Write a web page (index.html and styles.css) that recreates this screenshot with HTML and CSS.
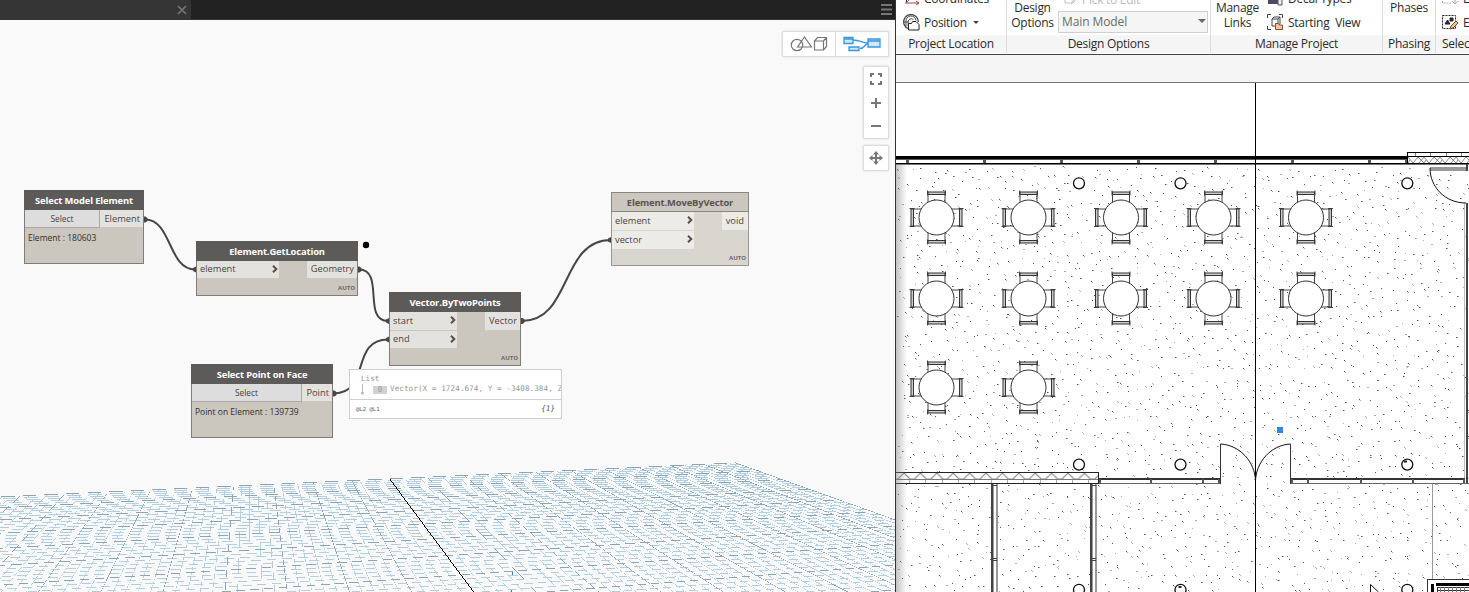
FILE: index.html
```html
<!DOCTYPE html>
<html lang="en">
<head>
<meta charset="utf-8">
<title>Workspace</title>
<link rel="stylesheet" href="styles.css">
</head>
<body>
<main class="app">
<section class="graph">
  <header class="tabs"><div class="tab"><svg width="10" height="10" viewBox="0 0 10 10"><path d="M1 1l8 8M9 1l-8 8" stroke="#777" stroke-width="1.700"/></svg></div><svg class="menu" width="11" height="11" viewBox="0 0 11 11"><path d="M0 1h11M0 5.500h11M0 10h11" stroke="#777" stroke-width="1.800"/></svg></header>
  <div class="canvas">
    <svg class="layer" width="895" height="572" viewBox="0 20 895 572" fill="none">
      <g shape-rendering="crispEdges">
        <path id="minorGray" stroke="#b7cbd7"/><path id="minorBlue" stroke="#b0d2e6"/><path id="major" stroke="#8da4b2"/><path id="axis" stroke="#000"/>
        <path d="M512.5 572v3M511.5 590v2" stroke="#2a86d8"/>
      </g>
      <g stroke="#474645" stroke-width="2">
        <path d="M145 219.500C172 219.500 168 269.500 195 269.500M359 269.500C385 269.500 362 321 388 321M522 321C572 321 560 240 611 240M334 393.500C371 393 350 339.500 388 339.500"/>
      </g>
      <g fill="#474645"><path d="M144 216.500h1.500l2 1.500v3l-2 1.500H144zM358 266.500h1.500l2 1.500v3l-2 1.500H358zM521 318h1.500l2 1.500v3l-2 1.500H521zM333 390.500h1.500l2 1.500v3l-2 1.500H333z"/><path d="M196 266.500l-3 1.500v3l3 1.500zM389 318l-3 1.500v3l3 1.500zM389 336.500l-3 1.500v3l3 1.500zM611 237l-3 1.500v3l3 1.500z"/></g>
      <circle cx="366" cy="245" r="3.200" fill="#000"/>
    </svg>

    <article class="node n-model">
      <h2>Select Model Element</h2>
      <div class="pick"><button>Select</button><span>Element</span></div>
      <p>Element : 180603</p>
    </article>
    <article class="node n-location">
      <h2>Element.GetLocation</h2>
      <div class="ports"><div class="ins"><span>element<svg class="chev" viewBox="0 0 6 8"><path d="M1 .8l3.300 3.200L1 7.200"/></svg></span></div><span class="out">Geometry</span></div>
      <small>AUTO</small>
    </article>
    <article class="node n-vector">
      <h2>Vector.ByTwoPoints</h2>
      <div class="ports"><div class="ins"><span>start<svg class="chev" viewBox="0 0 6 8"><path d="M1 .8l3.300 3.200L1 7.200"/></svg></span><span>end<svg class="chev" viewBox="0 0 6 8"><path d="M1 .8l3.300 3.200L1 7.200"/></svg></span></div><span class="out">Vector</span></div>
      <small>AUTO</small>
    </article>
    <article class="node n-point">
      <h2>Select Point on Face</h2>
      <div class="pick"><button>Select</button><span>Point</span></div>
      <p>Point on Element : 139739</p>
    </article>
    <article class="node n-move idle">
      <h2>Element.MoveByVector</h2>
      <div class="ports"><div class="ins"><span>element<svg class="chev" viewBox="0 0 6 8"><path d="M1 .8l3.300 3.200L1 7.200"/></svg></span><span>vector<svg class="chev" viewBox="0 0 6 8"><path d="M1 .8l3.300 3.200L1 7.200"/></svg></span></div><span class="out">void</span></div>
      <small>AUTO</small>
    </article>

    <div class="preview">
      <div class="tree"><div class="list">List</div><div class="item"><svg width="5" height="11" viewBox="0 0 5 11"><path d="M2.500 0v9" stroke="#bbb"/><circle cx="2.500" cy="9" r="1.500" fill="#bbb"/></svg><b>0</b><span>Vector(X = 1724.674, Y = -3408.384, Z</span></div></div>
      <div class="levels"><span>@L2 @L1</span><i>{1}</i></div>
    </div>

    <div class="modes">
      <span><svg width="38" height="16" viewBox="0 0 38 16" fill="none" stroke="#777" stroke-width="1.200"><circle cx="7" cy="9" r="5.700"/><path d="M14.500 1L7.500 11h14zM24.500 5h9v9h-9zM24.500 5l3-3.500h9v9l-3 3.500M33.500 5l3-3.500"/></svg></span>
      <span><svg width="38" height="16" viewBox="0 0 38 16" fill="#cfe9f6" stroke="#3a95dc" stroke-width="1.300"><path d="M10 4c8 0 8 3 15 3M17 12.500c5 0 4-4 8-5" fill="none"/><path d="M1 1.500h9v6H1zM25 3h12v8H25zM6 11h10v3.500H6z"/><path d="M1 3h9M25 5h12" fill="none"/></svg></span>
    </div>
    <div class="tools zoomer">
      <svg width="12" height="12" viewBox="0 0 12 12" fill="none" stroke="#777" stroke-width="2"><path d="M1 4V1h3M8 1h3v3M11 8v3H8M4 11H1V8"/></svg>
      <svg width="12" height="12" viewBox="0 0 12 12" stroke="#777" stroke-width="2"><path d="M1 6h10M6 1v10"/></svg>
      <svg width="12" height="12" viewBox="0 0 12 12" stroke="#777" stroke-width="2"><path d="M1 6h10"/></svg>
    </div>
    <div class="tools pan"><svg width="14" height="14" viewBox="0 0 14 14" fill="#777"><path d="M7 0l3 3.500H8V6h2.500V4L14 7l-3.500 3V8H8v2.500h2L7 14l-3-3.500h2V8H3.500v2L0 7l3.500-3v2H6V3.500H4z"/></svg></div>
  </div>
</section>

<section class="revit">
  <div class="ribbon">
    <div class="panel p1"><div class="body"><div class="rows">
      <div><svg width="17" height="17" viewBox="0 0 17 17" fill="none"><path d="M3.500 0v13" stroke="#234"/><path d="M3 13L13 3" stroke="#4b84c8"/><path d="M2 13h14M13 11l3 2-3 2" stroke="#a33f3a"/></svg>Coordinates</div>
      <div><svg width="17" height="17" viewBox="0 0 17 17" fill="none" stroke="#444"><path d="M5 14.500A7.300 7.300 0 1 1 15.300 8" stroke-width="1.300"/><path d="M3 12V7.500a5 5 0 0 1 10-1M5.200 12V8a3 3 0 0 1 5-2.500M1 8h4" /><path d="M5.500 9.500h3l1-2h3.500l3 3v5.500h-10.500z" fill="#fff" stroke="#222"/></svg>Position<i class="drop"></i></div></div></div><footer>Project Location</footer></div>
    <div class="panel p2"><div class="body"><div class="big">Design<br>Options</div><div class="model"><div class="edit"><svg width="15" height="12" viewBox="0 0 15 12" fill="none" stroke="#bbb"><path d="M1 2v8h5M8 9l5-6 1 1-5 6-2 1z"/></svg>Pick to Edit</div><div class="select">Main Model<i></i></div></div></div><footer>Design Options</footer></div>
    <div class="panel p3"><div class="body"><div class="big">Manage<br>Links</div><div class="rows">
      <div><svg width="17" height="17" viewBox="0 0 17 17"><path d="M1 6h11v8H1z" fill="#484b61"/><path d="M11 7h4v8h-4z" fill="#eee" stroke="#555"/></svg>Decal Types</div>
      <div><svg width="17" height="17" viewBox="0 0 17 17" fill="none" stroke="#444"><path d="M.5 4V.5H4M12 .5h3.500V4M.5 12v3.500H4M5 5l2-2h6v7l-2 2H5zM5 5h6v7M11 5l2-2"/><path d="M8.500 15.500v-6h3l1 1.500h3v4.500z" fill="#f0c49a" stroke="#8c4b32"/></svg>Starting&nbsp; View</div></div></div><footer>Manage Project</footer></div>
    <div class="panel p4"><div class="body"><div class="big">Phases</div></div><footer>Phasing</footer></div>
    <div class="panel p5"><div class="body"><div class="rows">
      <div><svg width="17" height="17" viewBox="0 0 17 17" fill="none" stroke="#aaa"><path d="M.5 2v11H9" stroke-dasharray="2 1"/><path d="M13 6v7M10 11l3 3 3-3"/></svg>Load</div>
      <div><svg width="17" height="17" viewBox="0 0 17 17" fill="none" stroke="#222"><path d="M.5 1.500h13v13H.5z" stroke-dasharray="2 1"/><path d="M3 10l2.500-4L8 10zM8 4h3v3H8z" fill="#333"/><path d="M8 15l1-3 5-5 2 2-5 5z" fill="#f0c980" stroke="#743"/></svg>Edit</div></div></div><footer>Selection</footer></div>
  </div>
  <div class="optionbar"></div>
  <div class="plan">
    <svg width="573" height="509" viewBox="896 83 573 509" fill="none" stroke="#333">
      <defs>
        <g id="chair"><path d="M-8.500-14v-12M8.500-14v-12M-9-27v5M9-27v5" stroke="#444"/><path d="M-8.500-25.500h17v2.500h-17z" fill="#ccc" stroke="#333"/></g>
        <g id="table"><use href="#chair"/><use href="#chair" transform="rotate(90)"/><use href="#chair" transform="rotate(180)"/><use href="#chair" transform="rotate(270)"/><circle r="17.500" fill="#fff"/></g>
        <linearGradient id="shade"><stop offset="0" stop-color="#888" stop-opacity=".5"/><stop offset="1" stop-color="#888" stop-opacity="0"/></linearGradient>
        <pattern id="truss" width="16.400" height="6.500" patternUnits="userSpaceOnUse" x="904" y="473"><path d="M0 0l6 6h4.500l6-6" stroke="#777"/></pattern>
        <pattern id="truss2" width="16" height="7" patternUnits="userSpaceOnUse" x="1408" y="157"><path d="M0 0l5 6 5-6M10 0l6 6M0 6l2-3M16 0l-5 6" stroke="#888"/></pattern>
      </defs>
      <g shape-rendering="crispEdges"><path id="speckDark" stroke="#555"/><path id="speckLight" stroke="#aaa"/></g>
      <g id="tables"></g>
      <g shape-rendering="crispEdges">
        <path d="M896 156h511v8h-511z" fill="#fff" stroke="none"/>
        <path d="M896 157.500h511" stroke="#000" stroke-width="3"/><path d="M896 163.500h573" stroke="#000"/><path d="M896 159.500h511" stroke="#555"/><path d="M896 164.500h573" stroke="#777"/>
        <path d="M907.500 159v4M984.500 159v4M1061.500 159v4M1138.500 159v4M1215.500 159v4M1292.500 159v4M1369.500 159v4M1406 159v4" stroke="#555" stroke-width="3"/>
        <path d="M1407 152h62v12h-62z" fill="#fff" stroke="none"/><path d="M1407.500 164v-11.500H1469M1407 156.500h62M1407 163.500h62" stroke="#000"/>
        <path d="M1415.500 153v3M1430.500 153v3M1446.500 153v3M1461.500 153v3" stroke="#888"/>
        <path d="M1430 167h36v4h-36z" fill="#999" stroke="none"/><path d="M1466.500 164v7M1466.500 203v281" stroke="#444" stroke-width="2"/><path d="M1464.500 203v275" stroke="#bbb"/>
        <path d="M894.500 472.500h204v11h-204z" fill="#fff" stroke="#222"/><path d="M896 479.500h202" stroke="#777"/><path d="M909.500 480v3M925.500 480v3M942.500 480v3M958.500 480v3M974.500 480v3M991.500 480v3M1007.500 480v3M1023.500 480v3M1040.500 480v3M1056.500 480v3M1072.500 480v3M1088.500 480v3" stroke="#aaa"/>
        <path d="M1099 478h121v6h-121zM1291 478h175v6h-175z" fill="#fff" stroke="none"/>
        <path d="M1099 479h121M1291 479h174" stroke="#333" stroke-width="2"/><path d="M1099 483.500h121M1291 483.500h178" stroke="#666"/>
        <path d="M1100 479v4M1151 479v4M1203 479v4M1219 479v4M1292 479v4M1308 479v4M1360.500 479v4M1413 479v4M1464 479v4" stroke="#555" stroke-width="2"/>
        <path d="M991 484h7v108h-7zM1090 484h7v108h-7z" fill="#fff" stroke="none"/><path d="M992 484v108M1091 484v108" stroke="#444" stroke-width="2"/><path d="M993.500 484v108M1092.500 484v108" stroke="#999"/><path d="M997.500 484v108M1096.500 484v108M996.500 484v108M1095.500 484v108" stroke="#999"/><path d="M993 485.500h4M1092 485.500h4M993 558.500h4M1092 558.500h4M993 560.500h4M1092 560.500h4" stroke="#444"/>
        <path d="M1432.500 484v95" stroke="#999"/><path d="M1220.500 444v40M1290.500 444v40" stroke="#333"/><path d="M1255.500 83v509" stroke="#000"/>
        <path d="M1427.500 592v-12.500H1469v12.500z" fill="#fff"/><path d="M1436 584h33" stroke="#000" stroke-width="3"/><path d="M1432 592v-8" stroke="#000" stroke-width="3"/><path d="M1437.500 592v-5H1469M1438 590.500h31" stroke="#333"/><path d="M1440.500 587v5M1444.500 587v5M1448.500 587v5M1452.500 587v5M1456.500 587v5M1460.500 587v5M1464.500 587v5" stroke="#777"/>
        <path d="M1277 427h6v6h-6z" fill="#2f88d8" stroke="none"/>
      </g>
      <path d="M896 473h202v6.500h-202z" fill="url(#truss)" stroke="none"/><path d="M1408 157h61v6.500h-61z" fill="url(#truss2)" stroke="none"/>
      <path d="M1220.500 444C1240 445 1255 462 1255.500 481M1290.500 444C1271 445 1256 462 1255.500 481M1430 168c0 19 15 35 36 35" stroke="#111"/>
      <g stroke="#111" stroke-width="1.300" fill="#fff"><circle cx="1079" cy="183.300" r="5.500"/><circle cx="1180.500" cy="183.300" r="5.500"/><circle cx="1407.300" cy="183.300" r="5.500"/><circle cx="1079" cy="464.600" r="5.500"/><circle cx="1180.500" cy="464.600" r="5.500"/><circle cx="1407.300" cy="464.600" r="5.500"/><circle cx="1079" cy="589.800" r="5.500"/><circle cx="1180.500" cy="589.800" r="5.500"/><circle cx="1407.300" cy="589.800" r="5.500"/></g>
      <path d="M1404 460.500h3v2h-3zM1178.500 586h3v2h-3z" fill="#222" stroke="none"/>
      <path d="M1370.500 592v-7.500l8 7.500" stroke="#111" fill="#fff"/>
      <path d="M896 165h11v427h-11z" fill="url(#shade)" stroke="none"/>
    </svg>
  </div>
</section>
</main>
<script src="scene.js"></script>
</body>
</html>
```
FILE: styles.css
```css
* { box-sizing: border-box; }
body { margin: 0; width: 1469px; height: 592px; overflow: hidden; font-family: "Open Sans", "Noto Sans", sans-serif; }
.app { display: flex; height: 592px; }
.graph { width: 896px; height: 592px; border-right: 1px solid #333; background: #f9f9f9; }
.tabs { height: 20px; background: #212121; border-bottom: 1px solid #3b3437; display: flex; justify-content: space-between; align-items: center; padding-right: 3px; }
.tab { width: 191px; height: 19px; background: #353535; display: flex; align-items: center; justify-content: flex-end; padding-right: 4px; }
.canvas { position: relative; height: 572px; overflow: hidden; }
.layer { display: block; }

.node { position: absolute; border: 1px solid #807d79; background: #cbc6be; color: #4a4541; font-size: 9.3px; display: flex; flex-direction: column; }
.node h2 { margin: -1px -1px 0; height: 20px; flex: none; background: #5d5b59; color: #fff; font-size: 9.4px; line-height: 21px; font-weight: 700; text-align: center; letter-spacing: -.13px; }
.node p { margin: 0; padding: 0 3px; line-height: 19px; font-size: 8.5px; color: #33302e; }
.pick { display: flex; height: 18px; flex: none; }
.pick button { flex: 1; border: 0; border-right: 1px solid #aaa; border-bottom: 1px solid #aaa; background: #ddd; padding: 0; font: 8.4px "Open Sans", sans-serif; color: #444; }
.pick span, .out { background: #e4e2de; line-height: 17px; padding: 0 3px 0 4px; text-align: right; height: 18px; }
.pick span { height: 17px; }
.ports { display: flex; justify-content: space-between; align-items: flex-start; }
.ins { display: flex; flex-direction: column; gap: 1px; }
.ins span { display: flex; align-items: center; justify-content: space-between; height: 18px; padding: 0 1px 2px 3px; background: #e4e2de; }
.ins span + span { height: 17px; }
.chev { width: 6px; height: 8px; fill: none; stroke: #55504c; stroke-width: 2; }
.node small { position: absolute; right: 2px; bottom: 3px; font-size: 6px; line-height: 8px; font-weight: 700; color: #6d6864; }
.n-model { left: 24px; top: 170px; width: 120px; height: 74px; }
.n-model button { flex: none; width: 75px; }
.n-model .pick span, .n-point .pick span { flex: 1; }
.n-location { left: 196px; top: 221px; width: 162px; height: 55px; }
.n-location .ins { width: 82px; }
.n-location .ins span, .n-location .out { height: 17px; line-height: 16px; }
.n-vector { left: 389px; top: 272px; width: 132px; height: 74px; }
.n-vector .ins { width: 67px; }
.n-point { left: 191px; top: 344px; width: 142px; height: 74px; }
.n-point button { flex: none; width: 110px; }
.n-point p { line-height: 20px; }
.n-move { left: 611px; top: 172px; width: 138px; height: 74px; }
.n-move .ins { width: 82px; }
.n-move .ins span + span { height: 18px; }
.n-move .out { padding-right: 4px; }
.idle { background: #d9d6cf; border-color: #999692; }
.idle h2 { background: #cbc6be; color: #595450; border: 1px solid #8a8784; line-height: 19px; }
.idle .ins span, .idle .out { background: #ecebe8; }

.preview { position: absolute; left: 349px; top: 349px; width: 213px; height: 50px; border: 1px solid #d0d0d0; background: #fff; font: 7.6px "DejaVu Sans Mono", monospace; color: #939a91; }
.tree { height: 30px; border-bottom: 1px solid #d0d0d0; padding: 3px 0 0 11px; overflow: hidden; }
.list { line-height: 11px; }
.item { display: flex; align-items: center; line-height: 10px; white-space: nowrap; overflow: hidden; }
.item span { letter-spacing: .08px; margin-top: -2px; }
.item svg { flex: none; margin-left: -1px; }
.item b { flex: none; width: 14px; height: 8px; line-height: 8px; margin: 0 3px 0 8px; background: #d2d2d2; text-align: center; font-weight: 400; }
.levels { display: flex; justify-content: space-between; padding: 0 6px; line-height: 18px; color: #555; }
.levels span { font-size: 5.6px; }

.modes { position: absolute; left: 782px; top: 11px; width: 107px; height: 26px; display: flex; background: #fff; border: 1px solid #ddd; border-radius: 2px; box-shadow: 0 0 2px #ccc; }
.modes span { flex: 1; display: flex; align-items: center; justify-content: center; }
.modes span + span { border-left: 1px solid #ddd; }
.tools { position: absolute; left: 863px; width: 26px; display: flex; flex-direction: column; align-items: center; background: #fff; border: 1px solid #ddd; border-radius: 2px; box-shadow: 0 0 2px #ccc; }
.zoomer { top: 46px; height: 73px; padding-top: 6px; gap: 11.500px; }
.pan { top: 125px; height: 26px; justify-content: center; }

.revit { width: 573px; height: 592px; background: #fff; overflow: hidden; }
.ribbon { height: 55px; display: flex; border-bottom: 1px solid #444; font-size: 12px; letter-spacing: -.27px; color: #2b2b2b; background: #fff; }
.panel { flex: none; height: 53px; border-right: 1px solid #ddd; overflow: hidden; }
.body { height: 35px; display: flex; overflow: hidden; }
.panel footer { height: 18px; line-height: 17px; background: #f5f5f5; text-align: center; white-space: nowrap; }
.p1 { width: 111px; } .p2 { width: 204px; } .p3 { width: 172px; } .p4 { width: 53px; } .p5 { width: 34px; border: 0; }
.p5 footer { padding-left: 6px; text-align: left; }
.rows { height: 34px; display: flex; flex-direction: column; justify-content: flex-end; }
.rows > div { flex: none; height: 24px; display: flex; align-items: center; white-space: nowrap; gap: 4px; }
.p1 .rows { padding-left: 7px; } .p5 .rows { padding-left: 6px; }
.drop { border: 3px solid transparent; border-top-color: #444; border-bottom: 0; margin-left: 2px; }
.big { text-align: center; line-height: 15px; }
.p2 .big { width: 51px; } .p3 .big { width: 53px; } .p4 .big { width: 52px; }
.p3 .rows { padding-left: 3px; }
.model { height: 35px; display: flex; flex-direction: column; justify-content: flex-end; }
.edit { flex: none; height: 24px; display: flex; align-items: center; gap: 3px; color: #bbb; padding-left: 6px; }
.select { flex: none; width: 150px; height: 22px; border: 1px solid #d0d0d0; margin-bottom: 2px; padding: 0 3px 2px; background: #f5f5f5; color: #686c68; display: flex; align-items: center; justify-content: space-between; letter-spacing: -.1px; }
.select i { border: 4px solid transparent; border-top-color: #666; border-bottom: 0; margin-right: -2px; }
.optionbar { height: 28px; background: #f5f5f5; border-bottom: 1px solid #777; }
.plan svg { display: block; }
```
FILE: scene.js
```js
const put = (id, runs) => document.getElementById(id).setAttribute("d", runs.join(""));

// Perspective ground grid: both line families meet the horizon at HY.
const HY = 289, VX = 249, SIDE = 4490, W = 895, H = 592;
const inv0 = 1 / 196.5, step = 5.05e-5;
const crossY = (x, j) => HY + (SIDE - x) / (SIDE - VX) / (inv0 - step * j);
const out = { minorGray: [], minorBlue: [], major: [], axis: [] };
const edgeX = y => VX + 848 * (y - HY) / 303;

for (let j = 0; j < 50; j++) {
  let start = -1, row = 0;
  for (let x = 0; x <= W; x++) {
    const y = crossY(x, j), r = Math.floor(y);
    const on = x < W && y < H && x <= edgeX(y) && y - r > 0.38;
    if (start >= 0 && (!on || r !== row)) {
      const id = j % 5 === 0 ? "major" : (row + j) % 2 ? "minorBlue" : "minorGray";
      out[id].push(`M${start} ${row}.5H${x}`);
      start = -1;
    }
    if (on && start < 0) { start = x; row = r; }
  }
}
for (let i = -60; i <= 50; i++) {
  const slope = (474 + 12.46 * i - VX) / 303;
  const id = i === 0 ? "axis" : i % 5 === 0 ? "major" : i % 2 ? "minorBlue" : "minorGray";
  const visible = (x, y) => x >= 0 && x < W && y < H && y >= crossY(x, 0);
  if (Math.abs(slope) < 1) {
    for (let y = 460; y < H; y++) {
      const x = VX + slope * (y - HY), c = Math.floor(x);
      if (visible(x, y) && (i === 0 || x - c < 0.6)) out[id].push(`M${c} ${y}.5h1`);
    }
  } else {
    for (let x = 0; x < W; x++) {
      const y = HY + (x - VX) / slope, r = Math.floor(y);
      if (visible(x, y) && y - r < 0.6) out[id].push(`M${x} ${r}.5h1`);
    }
  }
}
for (const id in out) put(id, out[id]);

// Floor stipple, one jittered dot per cell.
let seed = 71;
const rnd = () => (seed = (seed * 16807) % 2147483647) / 2147483647;
const dark = [], light = [];
for (let y = 166; y < 592; y += 10)
  for (let x = 897; x < 1469; x += 10) {
    const px = Math.floor(x + rnd() * 11), py = Math.floor(y + rnd() * 11);
    (rnd() > 0.35 ? dark : light).push(`M${px} ${py}.5h1`);
    if (rnd() > 0.4) light.push(`M${px + 1} ${py + (rnd() > 0.5 ? 1 : 0)}.5h1`);
  }
put("speckDark", dark);
put("speckLight", light);

const spots = [];
for (const y of [217.5, 298.5]) for (const x of [936.5, 1028.5, 1121, 1213.5, 1306]) spots.push([x, y]);
spots.push([936.5, 387.5], [1028.5, 387.5]);
for (const [x, y] of spots) {
  const u = document.createElementNS("http://www.w3.org/2000/svg", "use");
  u.setAttribute("href", "#table");
  u.setAttribute("transform", `translate(${x} ${y})`);
  document.getElementById("tables").append(u);
}
```
